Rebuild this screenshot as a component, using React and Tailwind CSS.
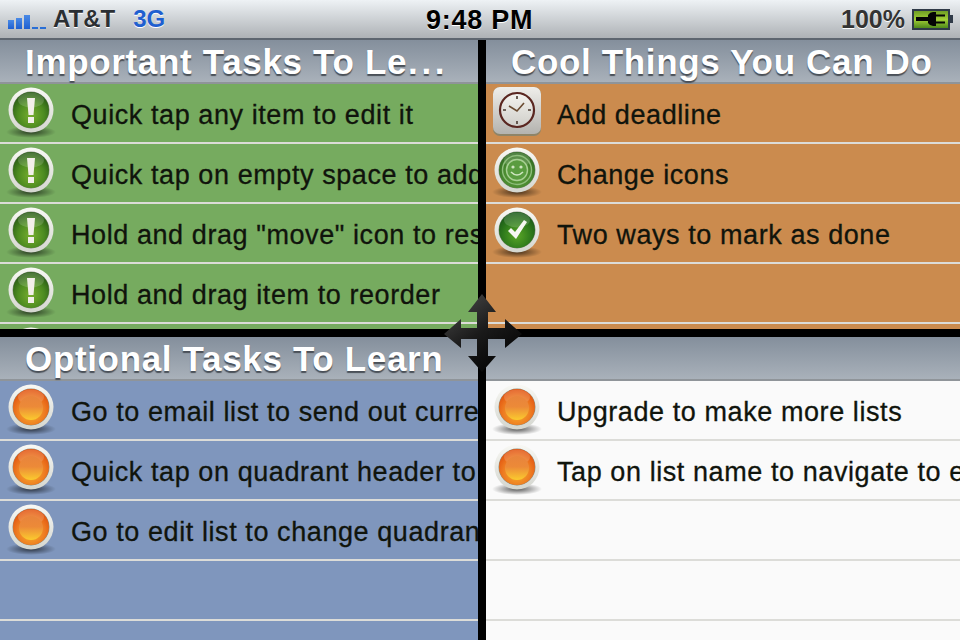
import { useId } from 'react';

function Glossy({ stops, children }) {
  const id = useId();
  return (
    <svg width="50" height="54" viewBox="0 0 50 54" className="shrink-0">
      <defs>
        <radialGradient id={id + 'b'} cx="50%" cy="65%" r="62%">
          <stop offset="0%" stopColor={stops[0]} />
          <stop offset="60%" stopColor={stops[1]} />
          <stop offset="100%" stopColor={stops[2]} />
        </radialGradient>
        <radialGradient id={id + 's'} cx="50%" cy="50%" r="50%">
          <stop offset="0%" stopColor="#000" stopOpacity="0.65" />
          <stop offset="100%" stopColor="#000" stopOpacity="0" />
        </radialGradient>
        <linearGradient id={id + 'r'} x1="0" y1="0" x2="0" y2="1">
          <stop offset="0%" stopColor="#f8f8f4" />
          <stop offset="100%" stopColor="#d4d6cf" />
        </linearGradient>
      </defs>
      <ellipse cx="25" cy="46" rx="25" ry="6" fill={`url(#${id}s)`} />
      <circle cx="25" cy="24" r="22.5" fill={`url(#${id}r)`} />
      <circle cx="25" cy="24" r="18.5" fill="#3c4a34" fillOpacity="0.55" />
      <circle cx="25" cy="24" r="18" fill={`url(#${id}b)`} />
      <ellipse cx="25" cy="14" rx="13" ry="7.5" fill="#fff" fillOpacity="0.16" />
      {children}
    </svg>
  );
}

function Exclaim() {
  return (
    <Glossy stops={['#78ae2e', '#4c8a20', '#2a5c16']}>
      <path d="M21 12h8l-1.5 17h-5z" fill="#f3efe9" />
      <rect x="22" y="31" width="6" height="6" fill="#f3efe9" />
    </Glossy>
  );
}

function Dot() {
  const id = useId();
  return (
    <Glossy stops={['#f8b52c', '#ee7d22', '#e2540f']}>
      <defs>
        <linearGradient id={id} x1="0" y1="0" x2="0" y2="1">
          <stop offset="0%" stopColor="#e8843c" />
          <stop offset="45%" stopColor="#ec8a38" />
          <stop offset="100%" stopColor="#fbcb2e" />
        </linearGradient>
      </defs>
      <circle cx="25" cy="25" r="12" fill={`url(#${id})`} />
    </Glossy>
  );
}

function Smile() {
  return (
    <Glossy stops={['#5f9c3c', '#4a8a30', '#2f6a20']}>
      <circle cx="25" cy="24" r="14.5" fill="none" stroke="#8fbe7c" strokeWidth="1.4" />
      <circle cx="25" cy="24" r="10.5" fill="#5a9c40" stroke="#a8d094" strokeWidth="1.4" />
      <circle cx="21" cy="21" r="1.6" fill="#cfe6c0" />
      <circle cx="29" cy="21" r="1.6" fill="#cfe6c0" />
      <path d="M19 26q6 6 12 0" fill="none" stroke="#cfe6c0" strokeWidth="1.6" />
    </Glossy>
  );
}

function Check() {
  return (
    <Glossy stops={['#5aa626', '#307c1c', '#1a5a18']}>
      <path d="M16 25l3-3 4 4 9-12 3 2-11 17z" fill="#f6f8f2" />
    </Glossy>
  );
}

function Clock() {
  return (
    <svg width="50" height="52" viewBox="0 0 50 52" className="shrink-0">
      <defs>
        <linearGradient id="clocktile" x1="0" y1="0" x2="0" y2="1">
          <stop offset="0%" stopColor="#efeeea" />
          <stop offset="100%" stopColor="#b4b3af" />
        </linearGradient>
        <linearGradient id="clockface" x1="0" y1="0" x2="0" y2="1">
          <stop offset="0%" stopColor="#f4f3ef" />
          <stop offset="100%" stopColor="#cfcec9" />
        </linearGradient>
      </defs>
      <rect x="1" y="1" width="48" height="49" rx="7" fill="#8e8468" />
      <rect x="1" y="1" width="48" height="47" rx="7" fill="url(#clocktile)" />
      <circle cx="25" cy="24" r="17" fill="url(#clockface)" stroke="#5a2620" strokeWidth="2.2" />
      <path d="M25 10v3M25 35v3M11 24h3M36 24h3" stroke="#4a3a30" strokeWidth="1.6" />
      <path d="M17 20l8 5 7-8" fill="none" stroke="#6a4a30" strokeWidth="1.6" />
    </svg>
  );
}

function Row({ icon, text }) {
  return (
    <div className="h-[60px] shrink-0 flex items-start border-b-2 border-[#dcdcd8] overflow-hidden">
      <div className="w-[62px] pl-[6px] pt-[2px] shrink-0">{icon}</div>
      {text && (
        <span className="pl-[9px] pt-[13px] text-[27px] leading-[36px] tracking-[0.58px] text-[#10140c] whitespace-nowrap [-webkit-text-stroke:0.3px_#10140c]">
          {text}
        </span>
      )}
    </div>
  );
}

function Quadrant({ title, bg, rows, blanks = 0, height }) {
  return (
    <div className={`flex flex-col overflow-hidden ${bg} ${height}`}>
      <div className="h-[44px] shrink-0 bg-gradient-to-b from-[#848f9c] to-[#a9b1ba] border-b-2 border-[#8f9499] pl-[25px] text-[35px] leading-[43px] font-bold tracking-[0.66px] text-white whitespace-nowrap [text-shadow:0_2px_1px_#4a5058]">
        {title}
      </div>
      <div>
        {rows.map((r, i) => <Row key={i} icon={r.icon} text={r.text} />)}
        {Array.from({ length: blanks }).map((_, i) => <div key={i} className="h-[60px] border-b-2 border-[#dcdcd8]" />)}
      </div>
    </div>
  );
}

function Battery() {
  return (
    <div className="flex items-center">
      <div className="w-[38px] h-[21px] border-2 border-[#2f3a48] bg-gradient-to-b from-[#6f9e24] via-[#a2cf36] to-[#4f8a1c] flex items-center justify-center">
        <svg width="30" height="14" viewBox="0 0 30 14">
          <path d="M0 5h12V3q2-3 5-3h3v2.5h9v2h-9v5h9v2h-9V14h-3q-3 0-5-3V9H0z" fill="#050505" />
        </svg>
      </div>
      <div className="w-[3px] h-[8px] bg-[#2f3a48]" />
    </div>
  );
}

function Signal() {
  return (
    <div className="flex items-end gap-[2px] h-[16px] mt-[4px]">
      <div className="w-[6px] h-[9px] bg-gradient-to-b from-[#4a8ae6] to-[#1f5fd0]" />
      <div className="w-[6px] h-[11px] bg-gradient-to-b from-[#4a8ae6] to-[#1f5fd0]" />
      <div className="w-[6px] h-[14px] bg-gradient-to-b from-[#4a8ae6] to-[#1f5fd0]" />
      <div className="w-[6px] h-[2px] bg-[#2a6fd6]" />
      <div className="w-[6px] h-[2px] bg-[#2a6fd6]" />
    </div>
  );
}

function StatusBar() {
  return (
    <div className="h-[40px] relative flex items-center justify-between bg-gradient-to-b from-[#eef2f5] to-[#aeb2b6] border-b-2 border-[#5e6670] text-[#2b2f33] font-bold [text-shadow:0_1px_0_#ffffff]">
      <div className="flex items-center pl-[8px]">
        <Signal />
        <span className="ml-[7px] text-[24px] leading-none">AT&amp;T</span>
        <span className="ml-[18px] text-[24px] leading-none text-[#1f5fd0]">3G</span>
      </div>
      <span className="absolute left-[426px] top-[3px] text-[27px] leading-[34px] tracking-[0.75px] text-black whitespace-pre">9:48 PM</span>
      <div className="flex items-center gap-[7px] pr-[7px]">
        <span className="text-[25px] leading-none text-[#333]">100%</span>
        <Battery />
      </div>
    </div>
  );
}

function MoveCursor() {
  return (
    <svg width="80" height="82" viewBox="0 0 80 82" className="absolute left-[443px] top-[293px]">
      <defs>
        <linearGradient id="mv" x1="0" y1="0" x2="0.7" y2="1">
          <stop offset="0%" stopColor="#505050" />
          <stop offset="55%" stopColor="#1a1a1a" />
          <stop offset="100%" stopColor="#030303" />
        </linearGradient>
      </defs>
      <path d="M39 1L53 19H45V35H62V26L79 41 62 55V46H45V63H53L39 79 25 63H34V46H18V55L1 41 18 26V35H34V19H25z" fill="url(#mv)" />
    </svg>
  );
}

export default function App() {
  return (
    <div className="relative w-[960px] h-[640px] overflow-hidden bg-black font-['Liberation_Sans',sans-serif]">
      <StatusBar />
      <div className="grid grid-cols-[478px_474px] gap-x-[8px] w-[960px]">
        <Quadrant
          title={<>Important Tasks To Le<span className="ml-[1px] tracking-[3.6px]">...</span></>}
          bg="bg-[#76ab5f]"
          height="h-[289px]"
          rows={[
            { icon: <Exclaim />, text: 'Quick tap any item to edit it' },
            { icon: <Exclaim />, text: 'Quick tap on empty space to add' },
            { icon: <Exclaim />, text: 'Hold and drag "move" icon to res' },
            { icon: <Exclaim />, text: 'Hold and drag item to reorder' },
            { icon: <Exclaim /> },
          ]}
        />
        <Quadrant
          title="Cool Things You Can Do"
          bg="bg-[#cb8b4e]"
          height="h-[289px]"
          rows={[
            { icon: <Clock />, text: 'Add deadline' },
            { icon: <Smile />, text: 'Change icons' },
            { icon: <Check />, text: 'Two ways to mark as done' },
          ]}
          blanks={2}
        />
      </div>
      <div className="grid grid-cols-[478px_474px] gap-x-[8px] w-[960px] mt-[8px]">
        <Quadrant
          title="Optional Tasks To Learn"
          bg="bg-[#7f96bd]"
          height="h-[303px]"
          rows={[
            { icon: <Dot />, text: 'Go to email list to send out curre' },
            { icon: <Dot />, text: 'Quick tap on quadrant header to' },
            { icon: <Dot />, text: 'Go to edit list to change quadran' },
          ]}
          blanks={2}
        />
        <Quadrant
          title=""
          bg="bg-[#fafafa]"
          height="h-[303px]"
          rows={[
            { icon: <Dot />, text: 'Upgrade to make more lists' },
            { icon: <Dot />, text: 'Tap on list name to navigate to e' },
          ]}
          blanks={3}
        />
      </div>
      <MoveCursor />
    </div>
  );
}
